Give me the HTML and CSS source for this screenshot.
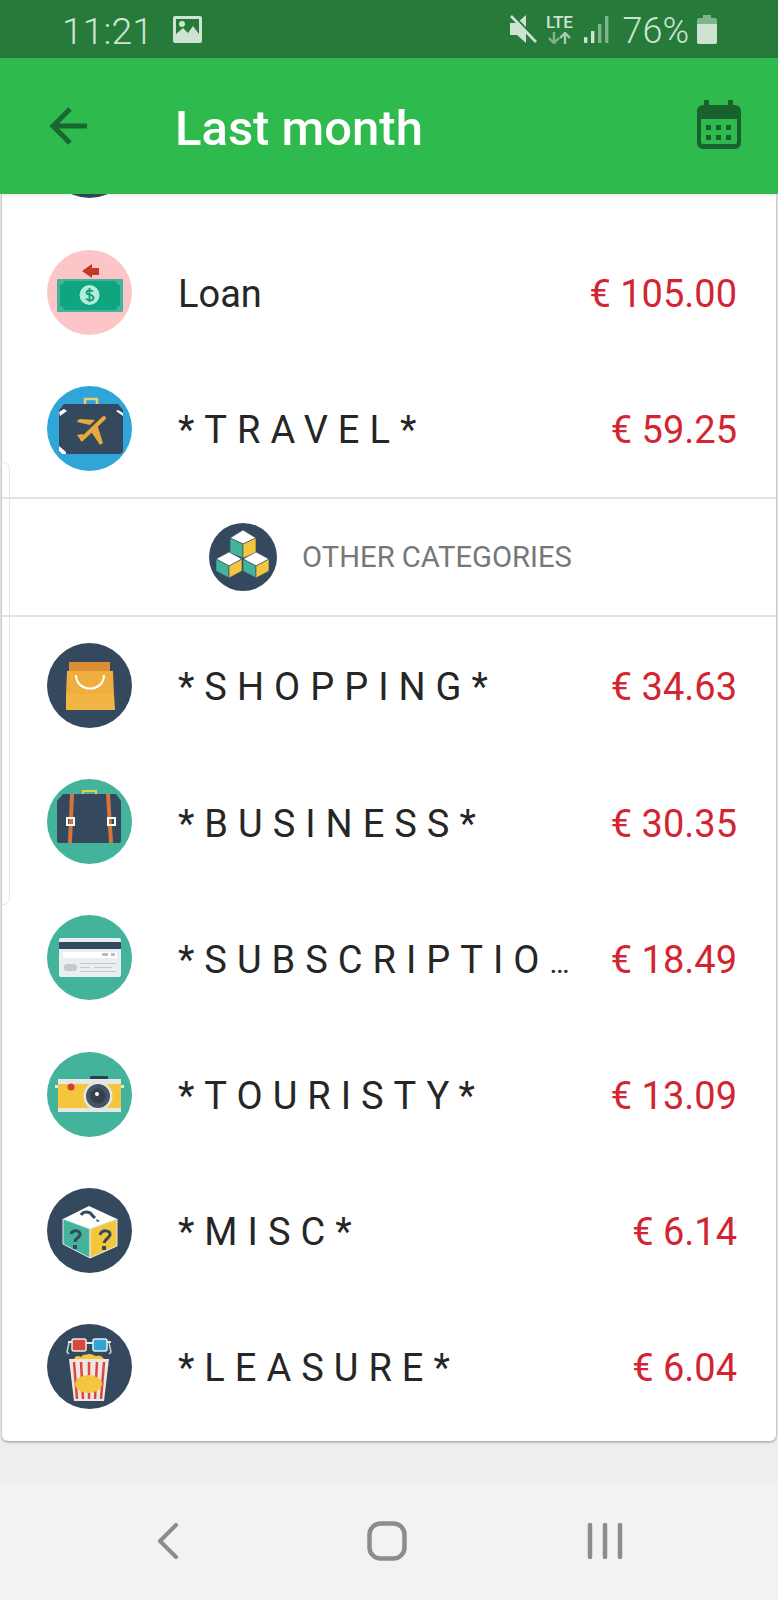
FILE: index.html
```html
<!DOCTYPE html>
<html lang="en">
<head>
    <meta charset="UTF-8">
    <meta name="viewport" content="width=device-width, initial-scale=1.0">
    <title>Last month</title>
    <link rel="stylesheet" href="styles.css">
</head>
<body>
    <div class="status-bar">
        <div class="status-left">
            <span class="clock">11:21</span>
            <svg class="st-image" viewBox="0 0 29 27"><path fill="#cfe3d3" fill-rule="evenodd" d="M2 0h25a2 2 0 0 1 2 2v23a2 2 0 0 1-2 2H2a2 2 0 0 1-2-2V2a2 2 0 0 1 2-2zM3 3v15l7-6 5 5 5-7 6 8V3z"/><circle cx="9" cy="8" r="3" fill="#cfe3d3"/></svg>
        </div>
        <div class="status-right">
            <svg class="st-mute" viewBox="0 0 28 28"><path fill="#cfe3d3" d="M1 8h7l9-8v28l-9-8H1z"/><path fill="none" stroke="#267a3a" stroke-width="2" d="M4 0l24 25"/><path fill="none" stroke="#cfe3d3" stroke-width="2.600" d="M2 1l25 26"/></svg>
            <div class="st-lte">
                <span class="lte-text">LTE</span>
                <svg class="st-arrows" viewBox="0 0 24 12"><path fill="none" stroke="#7fb48d" stroke-width="2.400" d="M7 0v10M2 6l5 5 5-5"/><path fill="none" stroke="#a9ccb3" stroke-width="2.400" d="M18 12V2M13 6l5-5 5 5"/></svg>
            </div>
            <svg class="st-signal" viewBox="0 0 25 27"><rect x="0" y="21" width="3.400" height="6" rx="1" fill="#cfe3d3"/><rect x="7" y="15" width="3.400" height="12" fill="#cfe3d3"/><rect x="14" y="8" width="3.400" height="19" fill="#7fb48d"/><rect x="21" y="0" width="3.400" height="27" fill="#7fb48d"/></svg>
            <span class="battery-text">76%</span>
            <svg class="st-battery" viewBox="0 0 20 29"><path fill="#7fb48d" d="M6 0h8v3h4a2 2 0 0 1 2 2v6H0V5a2 2 0 0 1 2-2h4z"/><path fill="#cfe3d3" d="M0 9h20v18a2 2 0 0 1-2 2H2a2 2 0 0 1-2-2z"/></svg>
        </div>
    </div>

    <div class="app-bar">
        <svg class="back-arrow" viewBox="0 0 39 38"><path fill="none" stroke="#17692f" stroke-width="5" d="M38 19H4M21 2L4 19l17 17"/></svg>
        <h1 class="title">Last month</h1>
        <svg class="calendar" viewBox="0 0 44 49"><path fill="#17622f" d="M7 0h5v5h19V0h5v5h2a6 6 0 0 1 6 6v32a6 6 0 0 1-6 6H6a6 6 0 0 1-6-6V11a6 6 0 0 1 6-6h1z"/><path fill="#2fba4e" d="M4 19h36v23a2 2 0 0 1-2 2H6a2 2 0 0 1-2-2z"/><path fill="#17622f" d="M9 25h5v5H9zM19 25h5v5h-5zM29 25h5v5h-5zM9 35h5v5H9zM19 35h5v5h-5zM29 35h5v5h-5z"/></svg>
    </div>

    <div class="content">
        <div class="card">
            <div class="peek"><svg class="cat-icon" viewBox="0 0 85 85"><circle cx="42.5" cy="42.5" r="42.5" fill="#34495e"/></svg></div>

            <div class="row">
                <svg class="cat-icon" viewBox="0 0 85 85">
                    <circle cx="42.5" cy="42.5" r="42.5" fill="#fdc5c7"/>
                    <path fill="#c0392b" d="M35 21l10-7v4h7v7h-7v3z"/>
                    <rect x="10" y="29" width="66" height="33" rx="1" fill="#43b39b"/>
                    <path fill="#0ea57f" d="M17 31h52a4 4 0 0 0 4 4v21a4 4 0 0 0-4 4H17a4 4 0 0 0-4-4V35a4 4 0 0 0 4-4z"/>
                    <circle cx="42.500" cy="45" r="10" fill="#b5ebdc"/>
                    <path fill="none" stroke="#0e9c78" stroke-width="1.800" d="M46 41.500c-1-1.500-6-2-6.500 .8s7 2 7 5.500-6 3-7.500 .8M42.500 38v14"/>
                </svg>
                <span class="name plain">Loan</span>
                <span class="amount">€ 105.00</span>
            </div>

            <div class="row">
                <svg class="cat-icon" viewBox="0 0 85 85">
                    <circle cx="42.5" cy="42.5" r="42.5" fill="#2fa5d8"/>
                    <path fill="none" stroke="#e8cf73" stroke-width="2.500" d="M38 19v-6h12v6"/>
                    <path fill="#34495e" d="M17 18h54l5 6v40a4 4 0 0 1-4 4H16a4 4 0 0 1-4-4V24z"/>
                    <path fill="#fff" d="M12 26l5-3 3 2-7 5zM76 27l-5-3-2 1 7 5zM12 60l7 6v2h-4l-3-3z"/>
                    <path fill="none" stroke="#e9a93a" stroke-width="4" stroke-linecap="round" d="M57 32L35 53"/>
                    <path fill="#e9a93a" d="M50 38l6 19-3 2-10-15zM43 39l-13-3 1-2 2-1 15 1zM36 48l-6 1 5 7 2-5z"/>
                </svg>
                <span class="name">*TRAVEL*</span>
                <span class="amount">€ 59.25</span>
            </div>

            <div class="section-head">
                <svg class="head-icon" viewBox="0 0 68 68">
                    <circle cx="34" cy="34" r="34" fill="#34495e"/>
                    <g stroke="#34495e" stroke-width="0.600">
                        <path fill="#fff" d="M34 7l13 8-13 6-13-6z"/><path fill="#43b39b" d="M21 15l13 6v14l-13-5z"/><path fill="#f4c63d" d="M47 15l-13 6v14l13-5z"/>
                        <path fill="#fff" d="M20 29l13 7-13 7-13-7z"/><path fill="#43b39b" d="M7 36l13 7v12l-13-7z"/><path fill="#f4c63d" d="M33 36l-13 7v12l13-7z"/>
                        <path fill="#fff" d="M47 29l13 7-13 7-13-7z"/><path fill="#43b39b" d="M34 36l13 7v12l-13-7z"/><path fill="#f4c63d" d="M60 36l-13 7v12l13-7z"/>
                    </g>
                </svg>
                <span class="head-label">OTHER CATEGORIES</span>
            </div>

            <div class="row">
                <svg class="cat-icon" viewBox="0 0 85 85">
                    <circle cx="42.5" cy="42.5" r="42.5" fill="#34495e"/>
                    <path fill="#dc8f32" d="M22 19h41v10H22z"/>
                    <path fill="#efae3e" d="M20 28h46l1 24H19z"/>
                    <path fill="#f2b544" d="M19 51h48l1 16H19z"/>
                    <path fill="none" stroke="#fff" stroke-width="2" d="M29 32c0 18 28 18 28 0"/>
                </svg>
                <span class="name">*SHOPPING*</span>
                <span class="amount">€ 34.63</span>
            </div>

            <div class="row">
                <svg class="cat-icon" viewBox="0 0 85 85">
                    <circle cx="42.5" cy="42.5" r="42.5" fill="#43b39b"/>
                    <path fill="none" stroke="#e8cf50" stroke-width="2" d="M36 18v-6h13v6"/>
                    <path fill="#34495e" d="M16 15h53l5 7v40a2 2 0 0 1-2 2H12a2 2 0 0 1-2-2V22z"/>
                    <path fill="#d8743a" d="M23 15h4l-2 49h-4zM59 15h4l3 49h-4z"/>
                    <path fill="#fff" fill-rule="evenodd" d="M19 38h9v9h-9zM21 40v5h5v-5zM60 38h9v9h-9zM62 40v5h5v-5z"/>
                </svg>
                <span class="name">*BUSINESS*</span>
                <span class="amount">€ 30.35</span>
            </div>

            <div class="row">
                <svg class="cat-icon" viewBox="0 0 85 85">
                    <circle cx="42.5" cy="42.5" r="42.5" fill="#43b39b"/>
                    <rect x="12" y="23" width="62" height="39" rx="2" fill="#e9eef0"/>
                    <rect x="12" y="27" width="62" height="7" fill="#34495e"/>
                    <rect x="16" y="37" width="54" height="6" fill="#fff"/>
                    <path fill="#b8bfc2" d="M55 38h6v3h-6zM64 38h4v3h-4z"/>
                    <rect x="17" y="49" width="13" height="7" rx="3" fill="#c5cacc"/>
                    <path fill="#c5cacc" d="M33 48h36v1H33zM33 52h10v1H33zM47 52h18v1H47zM33 56h36v1H33z"/>
                </svg>
                <span class="name">*SUBSCRIPTIO<span class="ellipsis">…</span></span>
                <span class="amount">€ 18.49</span>
            </div>

            <div class="row">
                <svg class="cat-icon" viewBox="0 0 85 85">
                    <circle cx="42.5" cy="42.5" r="42.5" fill="#43b39b"/>
                    <rect x="43" y="24" width="18" height="4" rx="1" fill="#2c3e50"/>
                    <rect x="11" y="27" width="63" height="33" fill="#e4e8e8"/>
                    <rect x="11" y="32" width="63" height="24" fill="#f4c63d"/>
                    <path fill="#e4e8e8" d="M8 33h3v3H8zM74 33h3v3h-3z"/>
                    <circle cx="24" cy="35" r="3.500" fill="#d43f3a"/>
                    <circle cx="51" cy="44" r="14.500" fill="#e4e8e8"/><circle cx="51" cy="44" r="12" fill="#465463"/><circle cx="51" cy="44" r="7.500" fill="#34404e"/><circle cx="50" cy="42" r="2" fill="#fff"/>
                </svg>
                <span class="name">*TOURISTY*</span>
                <span class="amount">€ 13.09</span>
            </div>

            <div class="row">
                <svg class="cat-icon" viewBox="0 0 85 85">
                    <circle cx="42.5" cy="42.5" r="42.5" fill="#34495e"/>
                    <path fill="#fff" d="M42 18l28 13-27 10-27-10z"/>
                    <path fill="#43b39b" stroke="#e4ecec" stroke-width="1" d="M16 31l27 10v29l-27-14z"/>
                    <path fill="#f4c63d" stroke="#e4ecec" stroke-width="1" d="M70 31L43 41v29l27-12z"/>
                    <path fill="none" stroke="#34495e" stroke-width="3" d="M34 27c2-4 9-4 11 0l3 3M24 46c1-5 10-4 9 1-1 3-5 3-5 7M53 47c2-6 11-5 10 0-1 3-5 4-6 8"/>
                    <path fill="#34495e" d="M49 31l4 2-3 1zM26 57h4v4h-4zM55 58h4v4h-4z"/>
                </svg>
                <span class="name">*MISC*</span>
                <span class="amount">€ 6.14</span>
            </div>

            <div class="row">
                <svg class="cat-icon" viewBox="0 0 85 85">
                    <circle cx="42.5" cy="42.5" r="42.5" fill="#34495e"/>
                    <path fill="none" stroke="#c6d6dc" stroke-width="1.500" d="M22 19l-2 9 2 2M62 19l2 9-2 2"/>
                    <rect x="25" y="15" width="14" height="12" rx="2" fill="#d9483b" stroke="#e6ecec" stroke-width="1.500"/>
                    <rect x="46" y="15" width="14" height="12" rx="2" fill="#2fa5d8" stroke="#e6ecec" stroke-width="1.500"/>
                    <path stroke="#e6ecec" stroke-width="2" d="M21 18h4M60 18h4M39 19h7"/>
                    <path fill="#f4c63d" d="M27 35c2-4 5-3 7-2 2-3 5-2 8-3 4 0 5 2 8 2 3-1 5 0 7 3z"/>
                    <path fill="#f0e6e4" d="M22 35h40l-5 42H27z"/>
                    <path stroke="#d9483b" stroke-width="2.500" d="M27 38l3 37M34 38l2 37M42 38v37M50 38l-2 37M57 38l-3 37"/>
                    <ellipse cx="41.500" cy="60" rx="13.500" ry="9" fill="#f4c63d"/>
                </svg>
                <span class="name">*LEASURE*</span>
                <span class="amount">€ 6.04</span>
            </div>
        </div>
        <div class="edge-handle"></div>
    </div>

    <div class="nav-bar">
        <svg class="nav-back" viewBox="0 0 22 36"><path fill="none" stroke="#8c8c8c" stroke-width="4" stroke-linecap="round" stroke-linejoin="round" d="M19 2L3 18l16 16"/></svg>
        <svg class="nav-home" viewBox="0 0 40 40"><rect x="2.500" y="2.500" width="35" height="35" rx="11" fill="none" stroke="#8c8c8c" stroke-width="4.500"/></svg>
        <svg class="nav-recent" viewBox="0 0 36 36"><path fill="none" stroke="#8c8c8c" stroke-width="4.500" stroke-linecap="round" d="M3 2v32M18 2v32M33 2v32"/></svg>
    </div>
</body>
</html>
```

FILE: styles.css
```css
* {
    box-sizing: border-box;
}
body {
    margin: 0;
    height: 1600px;
    display: flex;
    flex-direction: column;
    font-family: Roboto, "Noto Sans", sans-serif;
    background-color: #eeeeee;
    overflow: hidden;
}

/* status bar */
.status-bar {
    height: 58px;
    flex: none;
    display: flex;
    justify-content: space-between;
    align-items: center;
    padding: 0 61px 0 62px;
    background-color: #267a3a;
    color: #cfe3d3;
}
.status-left,
.status-right {
    display: flex;
    align-items: center;
}
.clock {
    font-size: 37.5px;
    font-weight: 300;
    line-height: 58px;
    margin-top: 4px;
}
.st-image {
    width: 29px;
    height: 27px;
    margin-left: 20px;
}
.st-mute {
    width: 28px;
    height: 28px;
}
.st-lte {
    width: 30px;
    margin-left: 7px;
    display: flex;
    flex-direction: column;
    align-items: center;
}
.lte-text {
    font-size: 17px;
    font-weight: 500;
    line-height: 15px;
}
.st-arrows {
    width: 24px;
    height: 12px;
    margin-top: 2px;
}
.st-signal {
    width: 25px;
    height: 27px;
    margin-left: 10px;
}
.battery-text {
    font-size: 36px;
    font-weight: 300;
    margin-left: 13px;
    margin-top: 4px;
    line-height: 58px;
}
.st-battery {
    width: 20px;
    height: 29px;
    margin-left: 8px;
}

/* app bar */
.app-bar {
    height: 136px;
    flex: none;
    display: flex;
    align-items: center;
    padding: 0 37px 0 49px;
    background-color: #2fba4e;
    position: relative;
    z-index: 2;
    box-shadow: 0 1px 4px rgba(0,0,0,0.12);
}
.back-arrow {
    width: 39px;
    height: 38px;
}
.title {
    flex: 1;
    margin: 4px 0 0 87px;
    font-size: 49px;
    font-weight: 500;
    color: white;
}
.calendar {
    width: 44px;
    height: 49px;
    margin-top: -4px;
}

/* card with the rows */
.content {
    flex: 1;
    position: relative;
}
.card {
    margin: 0 2px;
    height: 1247px;
    background: white;
    border-radius: 0 0 6px 6px;
    box-shadow: 0 1px 3px rgba(0,0,0,0.4);
}
.peek {
    height: 30px;
    padding-left: 45px;
    overflow: hidden;
}
.peek .cat-icon {
    margin-top: -81px;
}
.row {
    height: 136.2px;
    display: flex;
    align-items: center;
    padding: 0 39px 0 45px;
}
.cat-icon {
    display: block;
    width: 85px;
    height: 85px;
    flex: none;
}
.name {
    flex: 1;
    margin: 4px 0 0 46px;
    font-size: 38px;
    letter-spacing: 10px;
    color: #262626;
    white-space: nowrap;
}
.name.plain {
    letter-spacing: normal;
}
.ellipsis {
    font-size: 30px;
    letter-spacing: 0;
}
.amount {
    margin-top: 4px;
    font-size: 38px;
    color: #d32531;
    white-space: nowrap;
}
.section-head {
    height: 120px;
    margin-top: 1px;
    padding-left: 3px;
    display: flex;
    align-items: center;
    justify-content: center;
    gap: 25px;
    border-top: 2px solid #e2e2e2;
    border-bottom: 2px solid #e2e2e2;
}
.head-icon {
    width: 68px;
    height: 68px;
}
.head-label {
    font-size: 29.2px;
    color: #777777;
}

/* edge panel handle on the left side */
.edge-handle {
    position: absolute;
    left: -4px;
    top: 268px;
    width: 14px;
    height: 443px;
    border: 1px solid #e4e4e4;
    border-radius: 8px;
}

/* nav bar */
.nav-bar {
    height: 118px;
    flex: none;
    display: flex;
    align-items: center;
    background-color: #f2f2f2;
    padding-left: 157px;
}
.nav-back {
    width: 22px;
    height: 36px;
    margin-right: 188px;
}
.nav-home {
    width: 40px;
    height: 40px;
    margin-right: 180px;
}
.nav-recent {
    width: 36px;
    height: 36px;
}
```
